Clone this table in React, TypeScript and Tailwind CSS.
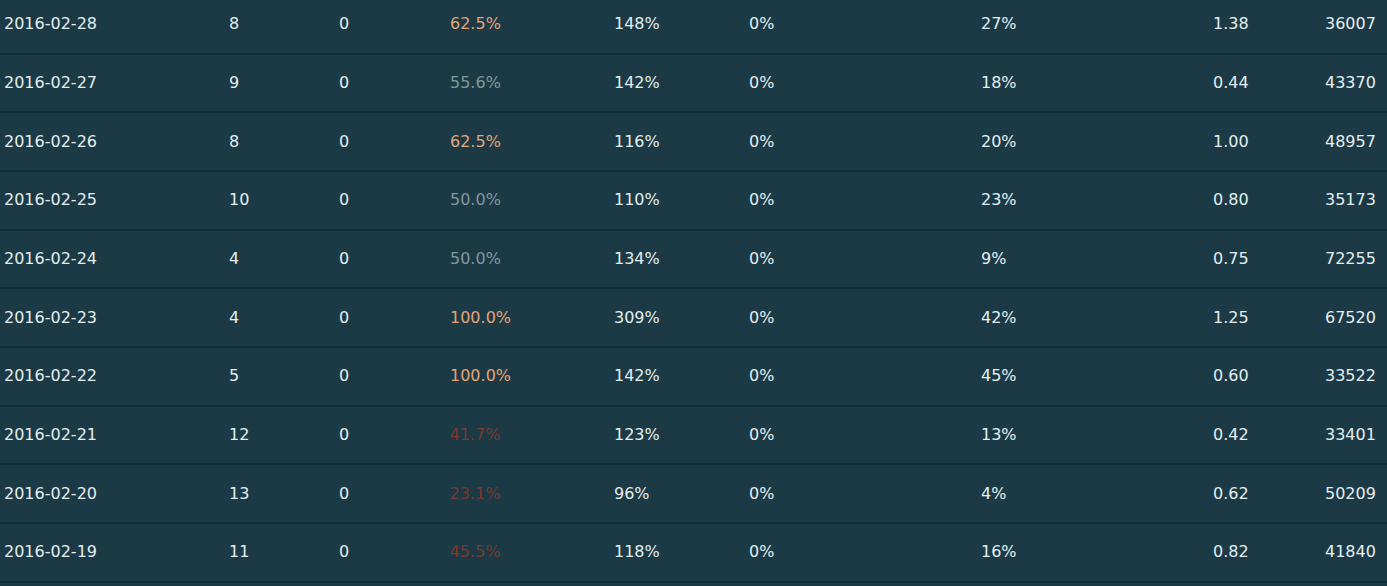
const rows: [string, string, string, string, string, string, string, string, string, string][] = [
  ["2016-02-28", "8", "0", "62.5%", "orange", "148%", "0%", "27%", "1.38", "36007"],
  ["2016-02-27", "9", "0", "55.6%", "gray", "142%", "0%", "18%", "0.44", "43370"],
  ["2016-02-26", "8", "0", "62.5%", "orange", "116%", "0%", "20%", "1.00", "48957"],
  ["2016-02-25", "10", "0", "50.0%", "gray", "110%", "0%", "23%", "0.80", "35173"],
  ["2016-02-24", "4", "0", "50.0%", "gray", "134%", "0%", "9%", "0.75", "72255"],
  ["2016-02-23", "4", "0", "100.0%", "orange", "309%", "0%", "42%", "1.25", "67520"],
  ["2016-02-22", "5", "0", "100.0%", "orange", "142%", "0%", "45%", "0.60", "33522"],
  ["2016-02-21", "12", "0", "41.7%", "red", "123%", "0%", "13%", "0.42", "33401"],
  ["2016-02-20", "13", "0", "23.1%", "red", "96%", "0%", "4%", "0.62", "50209"],
  ["2016-02-19", "11", "0", "45.5%", "red", "118%", "0%", "16%", "0.82", "41840"],
];

const rateColor: Record<string, string> = {
  orange: "text-[#e3a47a]",
  gray: "text-[#80979d]",
  red: "text-[#7e3a2e] blur-[0.7px]",
};

export default function App() {
  return (
    <div
      className="h-[586px] w-[1387px] overflow-hidden bg-[#1c3a45] text-[16px] text-[#e4eef0]"
      style={{ fontFamily: '"DejaVu Sans", Verdana, sans-serif' }}
    >
      <div className="-mt-[4px]">
        {rows.map((r) => (
          <div
            key={r[0]}
            className="grid h-[58.67px] grid-cols-[225px_110px_111px_164px_135px_232px_232px_112px_1fr] items-center border-b-2 border-[#132c35] pl-[4px]"
          >
            <span>{r[0]}</span>
            <span>{r[1]}</span>
            <span>{r[2]}</span>
            <span className={rateColor[r[4]]}>{r[3]}</span>
            <span>{r[5]}</span>
            <span>{r[6]}</span>
            <span>{r[7]}</span>
            <span>{r[8]}</span>
            <span>{r[9]}</span>
          </div>
        ))}
      </div>
    </div>
  );
}
